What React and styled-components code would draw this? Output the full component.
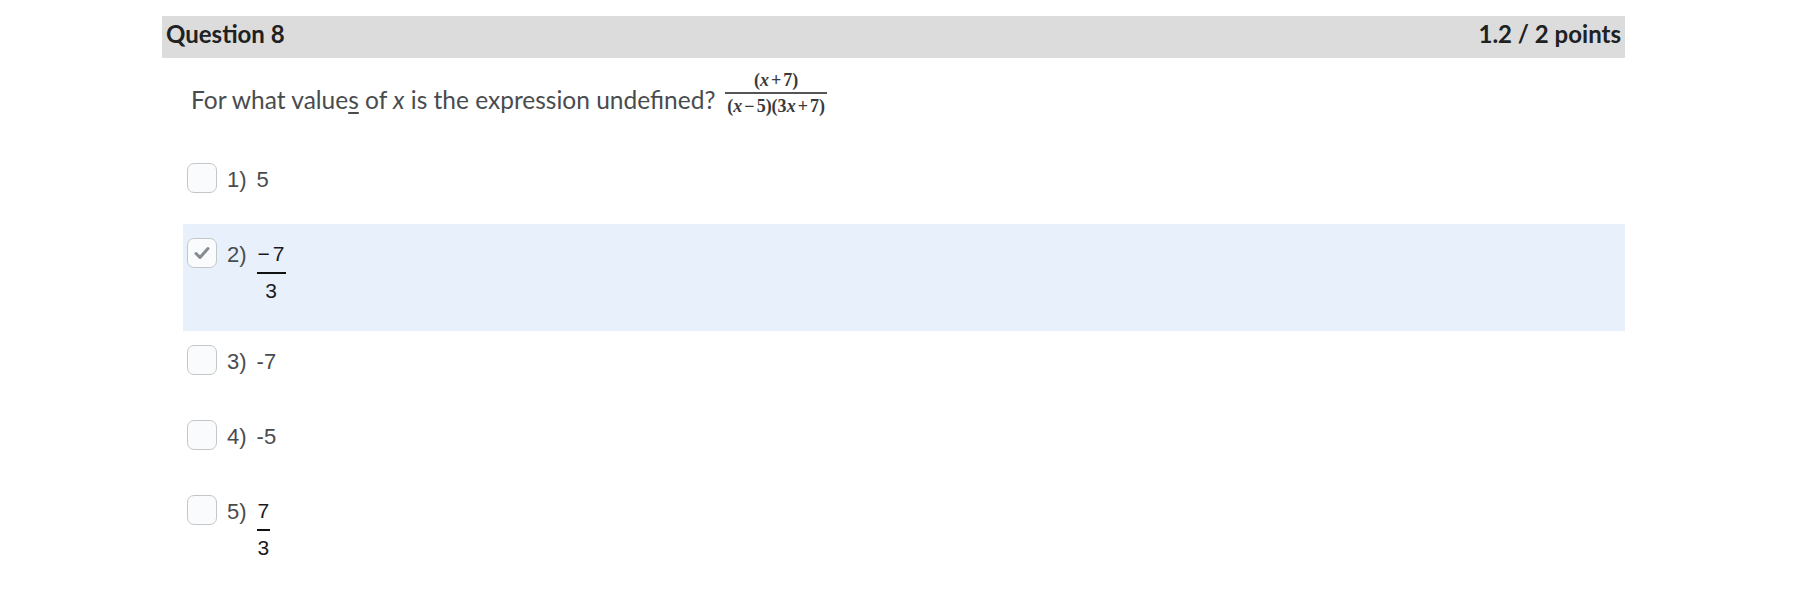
import styled, { createGlobalStyle } from "styled-components";

const GlobalStyle = createGlobalStyle`
  body {
    margin: 0;
    background: #ffffff;
    font-family: "Lato", "Liberation Sans", sans-serif;
    color: #494c4e;
  }
`;

const Page = styled.div`
  padding: 16px 0 0 162px;
  width: 1463px;
`;

const Header = styled.div`
  height: 35px;
  background: #dcdcdc;
  display: flex;
  align-items: center;
  justify-content: space-between;
  padding: 0 4px 7px 4px;
  font-family: "Lato", sans-serif;
  font-weight: 700;
  font-size: 24px;
  color: #202122;
`;

const Prompt = styled.div`
  display: flex;
  align-items: center;
  height: 82px;
  padding: 0 0 9px 29px;
  font-family: "Lato", sans-serif;
  font-size: 24.5px;
  color: #494c4e;

  & u {
    text-decoration-thickness: 2px;
    text-underline-offset: 3px;
  }
`;

const MathFrac = styled.span`
  display: inline-flex;
  flex-direction: column;
  align-items: center;
  margin: 0 0 12px 10px;
  font-family: "Liberation Serif", serif;
  font-size: 18px;
  font-weight: 700;
  color: #3a3a3a;
  line-height: 19px;
`;

const MathNum = styled.span`
  padding: 0 4px 2px;
  border-bottom: 2px solid #555;
  align-self: stretch;
  text-align: center;
`;

const MathDen = styled.span`
  padding: 3px 2px 0;
`;

const Op = styled.span`
  margin: 0 2px;
`;

const Options = styled.div`
  margin-left: 21px;
  width: 1442px;
`;

const Row = styled.div`
  display: flex;
  align-items: flex-start;
  gap: 10px;
  padding: 14px 0 29px 4px;
  background: ${(p) => (p.selected ? "#e8f1fb" : "transparent")};
`;

const Box = styled.span`
  flex: none;
  width: 28px;
  height: 28px;
  border: 1px solid #c4c7c9;
  border-radius: 7px;
  background: #f9fbfd;
  display: flex;
  align-items: center;
  justify-content: center;
`;

const Answer = styled.div`
  display: flex;
  align-items: flex-start;
  font-family: "Liberation Sans", Arial, sans-serif;
  font-size: 22px;
  line-height: 30px;
  padding-top: 2px;
  color: #494c4e;
`;

const Label = styled.span`
  margin-right: 10px;
`;

const Frac = styled.span`
  display: inline-flex;
  flex-direction: column;
  align-items: center;
  color: #1a1a1a;
  font-size: 21px;
`;

const Num = styled.span`
  line-height: 28px;
  padding: 0 1px 4px;
  border-bottom: 2px solid #111;
`;

const Minus = styled.span`
  margin-right: 3px;
`;

const Den = styled.span`
  line-height: 22px;
  padding-top: 6px;
`;

const Check = () => (
  <svg width="20" height="20" viewBox="0 0 20 20">
    <path
      d="M4 10.5 L8 14.5 L16 5.5"
      fill="none"
      stroke="#868b8f"
      strokeWidth="3"
      strokeLinecap="round"
      strokeLinejoin="round"
    />
  </svg>
);

const answers = [
  { label: "1)", value: "5" },
  { label: "2)", num: "7", neg: true, den: "3", selected: true },
  { label: "3)", value: "-7" },
  { label: "4)", value: "-5" },
  { label: "5)", num: "7", den: "3" },
];

export default function App() {
  return (
    <>
      <GlobalStyle />
      <Page>
        <Header>
          <span>Question 8</span>
          <span>1.2 / 2 points</span>
        </Header>
        <Prompt>
          <span>
            For what value<u>s</u> of <i>x</i> is the expression undefined?
          </span>
          <MathFrac>
            <MathNum>
              (<i>x</i>
              <Op>+</Op>7)
            </MathNum>
            <MathDen>
              (<i>x</i>
              <Op>−</Op>5)(3<i>x</i>
              <Op>+</Op>7)
            </MathDen>
          </MathFrac>
        </Prompt>
        <Options>
          {answers.map((a) => (
            <Row key={a.label} selected={a.selected}>
              <Box>{a.selected && <Check />}</Box>
              <Answer>
                <Label>{a.label}</Label>
                {a.num ? (
                  <Frac>
                    <Num>
                      {a.neg && <Minus>−</Minus>}
                      {a.num}
                    </Num>
                    <Den>{a.den}</Den>
                  </Frac>
                ) : (
                  <span>{a.value}</span>
                )}
              </Answer>
            </Row>
          ))}
        </Options>
      </Page>
    </>
  );
}
